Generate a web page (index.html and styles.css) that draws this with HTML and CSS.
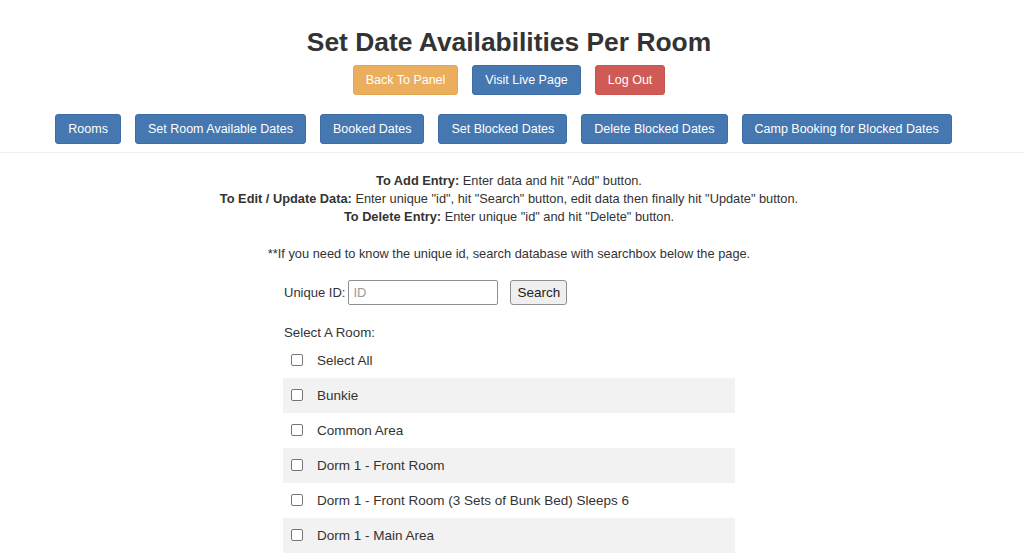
FILE: index.html
```html
<!DOCTYPE html>
<html>
<head>
<meta charset="utf-8">
<link rel="stylesheet" href="styles.css">
</head>
<body>
<header class="top">
  <h1 class="title">Set Date Availabilities Per Room</h1>
  <div class="actions">
    <a class="btn btn-warning">Back To Panel</a>
    <a class="btn btn-primary">Visit Live Page</a>
    <a class="btn btn-danger">Log Out</a>
  </div>
  <nav class="nav">
    <a class="btn btn-primary">Rooms</a>
    <a class="btn btn-primary">Set Room Available Dates</a>
    <a class="btn btn-primary">Booked Dates</a>
    <a class="btn btn-primary">Set Blocked Dates</a>
    <a class="btn btn-primary">Delete Blocked Dates</a>
    <a class="btn btn-primary">Camp Booking for Blocked Dates</a>
  </nav>
</header>
<main class="content">
  <div class="help">
    <p><b>To Add Entry:</b> Enter data and hit "Add" button.</p>
    <p><b>To Edit / Update Data:</b> Enter unique "id", hit "Search" button, edit data then finally hit "Update" button.</p>
    <p><b>To Delete Entry:</b> Enter unique "id" and hit "Delete" button.</p>
    <p class="note">**If you need to know the unique id, search database with searchbox below the page.</p>
  </div>
  <form class="form">
    <div class="idrow">
      <label class="lbl">Unique ID:</label>
      <input class="idinput" type="text" placeholder="ID">
      <button type="button" class="search">Search</button>
    </div>
    <div class="sel-label">Select A Room:</div>
    <div class="rooms">
      <label class="room"><span class="cb"></span>Select All</label>
      <label class="room alt"><span class="cb"></span>Bunkie</label>
      <label class="room"><span class="cb"></span>Common Area</label>
      <label class="room alt"><span class="cb"></span>Dorm 1 - Front Room</label>
      <label class="room"><span class="cb"></span>Dorm 1 - Front Room (3 Sets of Bunk Bed) Sleeps 6</label>
      <label class="room alt"><span class="cb"></span>Dorm 1 - Main Area</label>
    </div>
  </form>
</main>
</body>
</html>
```
FILE: styles.css
```css
* { box-sizing: border-box; }
html, body { margin: 0; padding: 0; background: #fff; overflow: hidden; }
body {
  font-family: "Liberation Sans", Arial, sans-serif;
  color: #333;
  font-size: 13px;
}
.top {
  display: flex;
  flex-direction: column;
  align-items: center;
  padding: 26px 0 8px 0;
  padding-right: 6px;
  border-bottom: 1px solid #eeeeee;
}
.title {
  margin: 0;
  font-size: 26.4px;
  line-height: 32px;
  font-weight: bold;
  color: #333;
}
.actions {
  display: flex;
  gap: 14px;
  margin-top: 7px;
}
.nav {
  display: flex;
  gap: 14px;
  margin-top: 19px;
  margin-right: 11px;
}
.btn {
  display: inline-block;
  height: 30px;
  line-height: 28px;
  padding: 0 12px;
  border: 1px solid transparent;
  border-radius: 3px;
  color: #fff;
  font-size: 12.5px;
  white-space: nowrap;
  text-decoration: none;
}
.btn-warning { background: #eaae5d; border-color: #e4a752; }
.btn-primary { background: #4577b1; border-color: #3e6ea6; }
.btn-danger { background: #d05a55; border-color: #c9534e; }
.content {
  display: flex;
  flex-direction: column;
  align-items: center;
  padding-right: 6px;
}
.help {
  text-align: center;
  font-size: 12.8px;
  padding-top: 19px;
}
.help p { margin: 0; line-height: 18px; }
.help b { font-weight: bold; }
.help .note { margin-top: 19px; }
.form {
  width: 452px;
  margin-top: 17px;
}
.idrow {
  display: flex;
  align-items: center;
  padding-left: 1px;
  height: 24px;
}
.lbl { font-size: 13px; margin-right: 3px; }
.idinput {
  width: 150px;
  height: 25px;
  border: 1px solid #8f8f8f;
  border-radius: 2px;
  padding: 1px 4px;
  font-family: "Liberation Sans", Arial, sans-serif;
  font-size: 13px;
  color: #333;
}
.idinput::placeholder { color: #999; }
.search {
  margin-left: 12px;
  height: 25px;
  width: 57px;
  padding: 0;
  border: 1px solid #8f8f8f;
  border-radius: 3px;
  background: #efefef;
  font-family: "Liberation Sans", Arial, sans-serif;
  font-size: 13.5px;
  color: #222;
}
.sel-label {
  margin-top: 20px;
  padding-left: 1px;
  line-height: 18px;
  font-size: 13.3px;
}
.rooms {
  display: flex;
  flex-direction: column;
  margin-top: 1px;
}
.room {
  display: flex;
  align-items: center;
  height: 35px;
  padding-left: 8px;
  font-size: 13.5px;
  color: #333;
}
.room.alt { background: #f2f2f2; }
.cb {
  width: 12px;
  height: 12px;
  border: 1px solid #767676;
  border-radius: 2px;
  background: #fff;
  margin-right: 14px;
  margin-top: -2px;
}
```
